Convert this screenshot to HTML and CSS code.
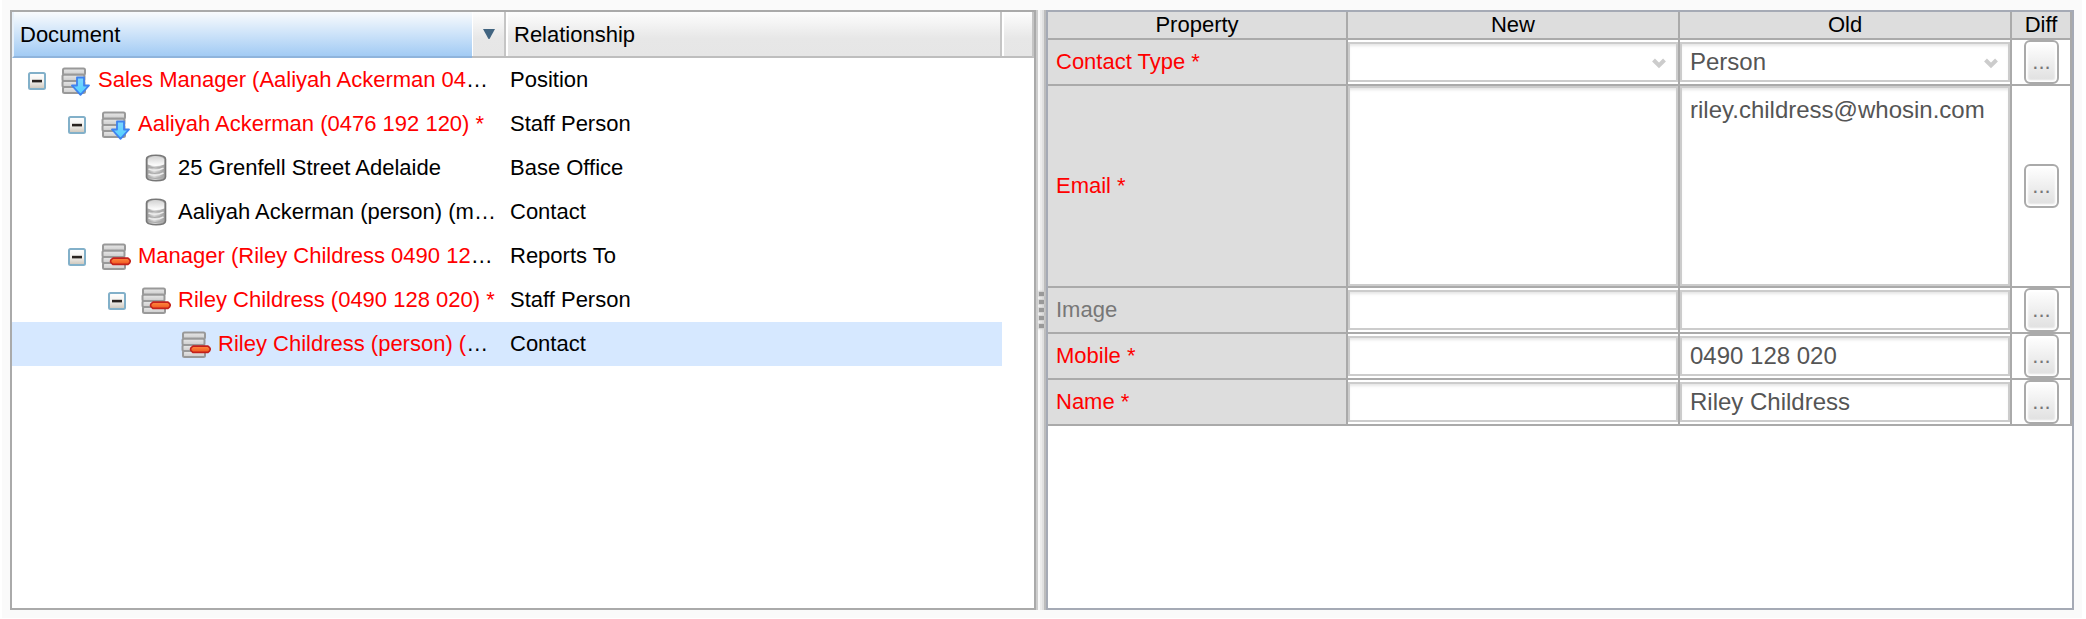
FILE: index.html
```html
<!DOCTYPE html>
<html lang="en">
<head>
<meta charset="utf-8">
<title>Document comparison</title>
<link rel="stylesheet" href="styles.css">
</head>
<body>
<svg class="defs" width="0" height="0">
  <defs>
    <linearGradient id="bar" x1="0" y1="0" x2="0" y2="1"><stop offset="0" stop-color="#e8e8e8"/><stop offset="1" stop-color="#ccc"/></linearGradient>
    <linearGradient id="blue" x1="0" y1="0" x2="0" y2="1"><stop offset="0" stop-color="#7fd6ff"/><stop offset="1" stop-color="#4fd0ff"/></linearGradient>
    <linearGradient id="orange" x1="0" y1="0" x2="0" y2="1"><stop offset="0" stop-color="#ff8a40"/><stop offset="1" stop-color="#ef5520"/></linearGradient>
    <linearGradient id="cyl" x1="0" y1="0" x2="1" y2="0"><stop offset="0" stop-color="#999"/><stop offset=".4" stop-color="#dcdcdc"/><stop offset="1" stop-color="#999"/></linearGradient>
    <linearGradient id="lid" x1="0" y1="0" x2="0" y2="1"><stop offset="0" stop-color="#d4d4d4"/><stop offset="1" stop-color="#fff"/></linearGradient>
    <linearGradient id="box" x1="0" y1="0" x2="0" y2="1"><stop offset="0" stop-color="#fff"/><stop offset=".5" stop-color="#f4f2ef"/><stop offset="1" stop-color="#cbc4b8"/></linearGradient>
    <g id="stack" fill="url(#bar)" stroke="#999" stroke-width="2">
      <rect x="2" y="2.500" width="22" height="6.2" rx="1.500"/>
      <rect x="1.500" y="8.700" width="22" height="6.2" rx="1.500"/>
      <rect x="1.500" y="14.900" width="22" height="6.2" rx="1.500"/>
      <rect x="2" y="21.100" width="22" height="6" rx="1.500"/>
    </g>
    <symbol id="down" viewBox="0 0 30 30"><use href="#stack"/><path d="M16 11.500h7v8h5L19.500 28.800 11 19.500h5z" fill="url(#blue)" stroke="#3f82ee" stroke-width="1.800" stroke-linejoin="round"/></symbol>
    <symbol id="minus" viewBox="0 0 30 30"><use href="#stack"/><path d="M12 16.200H27Q29.200 17.500 29.200 19.200T27 22.400H12Q9.500 21 9.500 19.200T12 16.200Z" fill="url(#orange)" stroke="#c3211c" stroke-width="1.700"/></symbol>
    <symbol id="db" viewBox="0 0 22 28"><path d="M1.500 5C1.500 0 20.500 0 20.500 5V23C20.500 28 1.500 28 1.500 23Z" fill="url(#cyl)" stroke="#777" stroke-width="1.600"/><path d="M2.800 5.500C3.500 1.500 18.500 1.500 19.200 5.500V10.500Q11 13.500 2.800 10.500Z" fill="url(#lid)"/><path d="M3.500 15Q11 18 18.500 14M3.500 20Q11 23 18.500 19" fill="none" stroke="#ececec" stroke-width="1.500"/><path d="M3 12.500Q11 15.500 19 12.500M3 18Q11 21 19 17M3 23Q11 26 19 22.500" fill="none" stroke="#aaa" stroke-width="1.200"/></symbol>
    <symbol id="toggle" viewBox="0 0 18 18"><rect x="1" y="1" width="16" height="16" rx="1.500" fill="url(#box)" stroke="#82b0c9" stroke-width="2"/><rect x="4" y="7.800" width="10" height="2.600" fill="#29231f"/></symbol>
    <symbol id="chevron" viewBox="0 0 16 12"><path d="M2.500 3 8 8.500 13.500 3" fill="none" stroke="#ccc" stroke-width="4"/></symbol>
  </defs>
</svg>
<main class="workspace">
  <section class="tree">
    <header class="tree-head">
      <div class="head-doc">Document</div>
      <div class="head-menu"><svg width="12" height="11" viewBox="0 0 12 11"><path d="M0 0h12L6.500 10h-1z" fill="#416480"/></svg></div>
      <div class="head-rel">Relationship</div>
      <div class="head-end"></div>
    </header>
    <div class="row"><div class="doc l0"><svg class="toggle"><use href="#toggle"/></svg><svg class="icon"><use href="#down"/></svg><span class="changed">Sales Manager (Aaliyah Ackerman 04</span>…</div><div class="rel">Position</div></div>
    <div class="row"><div class="doc l1"><svg class="toggle"><use href="#toggle"/></svg><svg class="icon"><use href="#down"/></svg><span class="changed">Aaliyah Ackerman (0476 192 120) *</span></div><div class="rel">Staff Person</div></div>
    <div class="row"><div class="doc leaf"><svg class="db"><use href="#db"/></svg><span>25 Grenfell Street Adelaide</span></div><div class="rel">Base Office</div></div>
    <div class="row"><div class="doc leaf"><svg class="db"><use href="#db"/></svg><span>Aaliyah Ackerman (person) (m</span>…</div><div class="rel">Contact</div></div>
    <div class="row"><div class="doc l1"><svg class="toggle"><use href="#toggle"/></svg><svg class="icon"><use href="#minus"/></svg><span class="changed">Manager (Riley Childress 0490 12</span>…</div><div class="rel">Reports To</div></div>
    <div class="row"><div class="doc l2"><svg class="toggle"><use href="#toggle"/></svg><svg class="icon"><use href="#minus"/></svg><span class="changed">Riley Childress (0490 128 020) *</span></div><div class="rel">Staff Person</div></div>
    <div class="row selected"><div class="doc l3"><svg class="icon"><use href="#minus"/></svg><span class="changed">Riley Childress (person) (</span>…</div><div class="rel">Contact</div></div>
  </section>
  <div class="splitter"><div class="grip"><i></i><i></i><i></i><i></i><i></i></div></div>
  <section class="details">
    <div class="grid">
      <div class="th">Property</div><div class="th">New</div><div class="th">Old</div><div class="th">Diff</div>
      <div class="name changed">Contact Type *</div><div class="cell"><div class="field select"><svg class="chevron"><use href="#chevron"/></svg></div></div><div class="cell"><div class="field select">Person<svg class="chevron"><use href="#chevron"/></svg></div></div><div class="diff"><button>...</button></div>
      <div class="name changed">Email *</div><div class="cell tall"><div class="field area"></div></div><div class="cell tall"><div class="field area">riley.childress@whosin.com</div></div><div class="diff"><button>...</button></div>
      <div class="name">Image</div><div class="cell"><div class="field"></div></div><div class="cell"><div class="field"></div></div><div class="diff"><button>...</button></div>
      <div class="name changed">Mobile *</div><div class="cell"><div class="field"></div></div><div class="cell"><div class="field">0490 128 020</div></div><div class="diff"><button>...</button></div>
      <div class="name changed">Name *</div><div class="cell"><div class="field"></div></div><div class="cell"><div class="field">Riley Childress</div></div><div class="diff"><button>...</button></div>
    </div>
  </section>
</main>
</body>
</html>
```
FILE: styles.css
```css
* { box-sizing: border-box; }
html, body { height: 100%; overflow: hidden; }
body { margin: 0; background: #fff; font: 22px/26px "Liberation Sans", Arial, sans-serif; color: #000; }
.defs { position: absolute; }
.workspace { display: flex; width: 2080px; height: 618px; margin-left: 2px; padding: 10px 8px 8px; background: #fafafa; }
.tree { width: 1026px; background: #fff; border: 2px solid #aaa; }
.tree-head { display: flex; width: 1022px; height: 46px; line-height: 42px; background: linear-gradient(#fdfdfd, #e7e7e7 60%, #e6e6e6); border-bottom: 2px solid #bebebe; border-right: 2px solid #c5c5c5; }
.head-doc { width: 460px; height: 46px; padding: 2px 0 0 6px; border-left: 2px solid #e8f1fa; border-bottom: 2px solid #8fb4dc; background: linear-gradient(#f9fbfd, #cde3f9 50%, #a2cbf4); }
.head-menu { display: flex; align-items: center; justify-content: center; width: 34px; border-right: 2px solid #c5c5c5; border-left: 1px solid #fff; }
.head-rel { width: 496px; padding: 2px 0 0 6px; border-left: 2px solid #fff; border-right: 2px solid #c5c5c5; }
.head-end { flex: 1; border-left: 2px solid #fff; }
.row { display: flex; width: 990px; height: 44px; }
.selected { background: #d6e8ff; }
.doc { display: flex; align-items: center; width: 494px; white-space: nowrap; }
.rel { padding: 9px 0 0 4px; }
.changed { color: #f00; }
.toggle { width: 18px; height: 18px; margin: 2px 15px 0 0; flex: none; }
.icon { width: 30px; height: 30px; margin: 2px 7px 0 0; flex: none; }
.db { width: 22px; height: 28px; margin: 0 11px 1px 0; flex: none; }
.l0 { padding-left: 16px; }
.l1 { padding-left: 56px; }
.l2 { padding-left: 96px; }
.l3 { padding-left: 169px; }
.leaf { padding-left: 133px; }
.splitter { display: flex; align-items: center; width: 10px; background: linear-gradient(90deg, #cdcdcd 2px, #f9f9f9 2px 4px, #ececec 4px 6px, #e0e0e0 6px 8px, #bcbcbc 8px); }
.grip { display: flex; flex-direction: column; gap: 4px; margin-left: 3px; }
.grip i { width: 5px; height: 4px; background: #999; box-shadow: 0 0 2px 1px #ccc; }
.details { width: 1028px; background: #fff; border: 2px solid #a5aab5; }
.grid { display: grid; grid-template-columns: 300px 332px 332px 60px; grid-template-rows: 28px 46px 202px 46px 46px 46px; width: 1024px; }
.grid > div { border-right: 2px solid #aaa; border-bottom: 2px solid #aaa; }
.th { background: #ddd; text-align: center; line-height: 25px; }
.name { display: flex; align-items: center; padding: 0 0 1px 8px; background: #ddd; color: #777; }
.grid > .changed { color: #f00; }
.cell { padding: 2px 0; }
.tall { padding: 0; }
.field { display: flex; align-items: center; height: 40px; padding: 0 8px; border: 2px solid #ccc; background: #fff; box-shadow: inset 0 3px 3px -1px #e6e6e6; font-size: 24px; color: #555; }
.area { align-items: flex-start; height: 200px; padding-top: 9px; }
.select { justify-content: space-between; }
.chevron { width: 16px; height: 12px; margin: 1px 1px 0 auto; }
.diff { display: flex; align-items: center; justify-content: center; }
button { width: 35px; height: 44px; margin-left: 1px; padding: 0; border: 2px solid #aaa; border-radius: 6px; background: linear-gradient(#fff, #dfdfdf); box-shadow: inset 0 0 2px 2px #fff; font: 22px "Liberation Sans", Arial, sans-serif; color: #777; }
```
